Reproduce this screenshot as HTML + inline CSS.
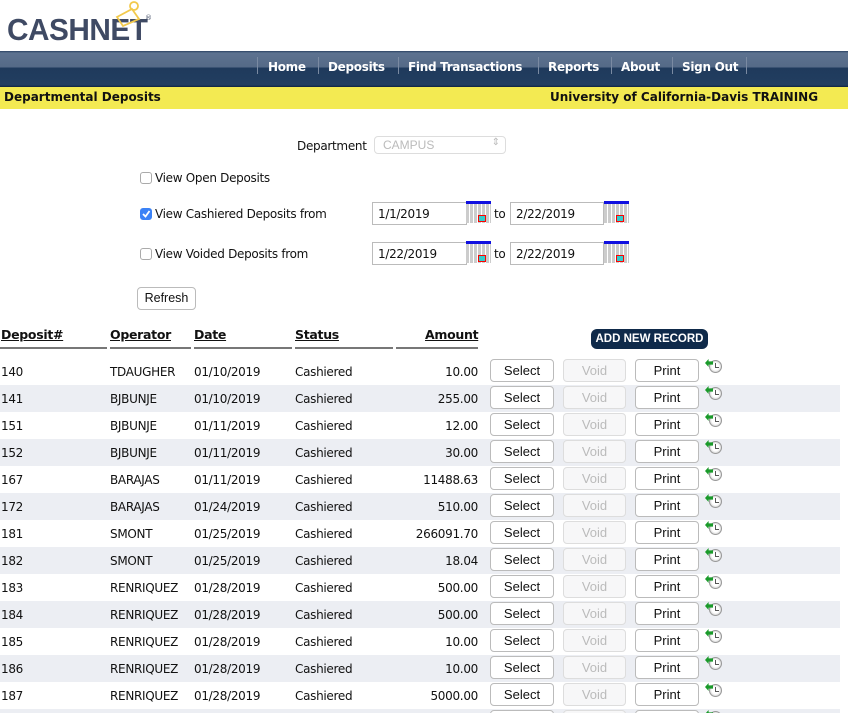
<!DOCTYPE html>
<html><head><meta charset="utf-8"><style>
*{box-sizing:border-box}
html,body{margin:0;width:862px;height:713px;overflow:hidden}
body{background:#fff;font-family:"DejaVu Sans","Liberation Sans",sans-serif;font-size:12px;color:#111;position:relative;letter-spacing:-0.3px}
.a{position:absolute;white-space:nowrap}
.logo{left:7px;top:12px;font-family:"Liberation Sans",sans-serif;font-weight:bold;font-size:31px;color:#3f4a64;letter-spacing:-0.5px;transform:scaleX(0.96);transform-origin:left}
.nav{left:0;top:51px;width:848px;height:36px;background:linear-gradient(#2a4263 0,#5d7290 2px,#556a87 16px,#1f3a5c 17px,#223e60 34px,#0f2440 36px)}
.nav span{position:absolute;top:9px;color:#fff;font-weight:bold;font-size:12px;letter-spacing:-0.3px}
.sep{position:absolute;top:6px;width:1px;height:17px;background:#1a2c44;border-right:1px solid #7a8aa2}
.yel{left:0;top:87px;width:848px;height:22px;background:#f3ea52;font-weight:bold;font-size:12px;letter-spacing:0}
.inp{position:absolute;height:23px;border:1px solid #bbb;background:#fff;padding:4px 5px;font-size:12px}
.cal{position:absolute;width:25px;height:22px;background:repeating-linear-gradient(90deg,#ccc 0 3px,#fff 3px 4px);border-top:3px solid #1010e0}
.cal:after{content:"";position:absolute;left:12px;top:11px;width:6px;height:5px;border:1px solid red;background:#3cc}
.cb{position:absolute;width:12px;height:12px;border:1px solid #aaa;border-radius:3px;background:#fff}
.btn{position:absolute;height:23px;border:1px solid #bbb;border-radius:4px;background:#fff;text-align:center;line-height:21px;font-family:"Liberation Sans",sans-serif;font-size:13px;letter-spacing:0}
.h{position:absolute;top:327px;font-weight:bold;font-size:12.5px;text-decoration:underline}
.hl{position:absolute;top:347px;height:2px;background:#777}
.row{position:absolute;left:0;width:840px;height:27px}
.row span{position:absolute;top:7px}
.ic{position:absolute;left:709px;top:2px;width:13px;height:13px;border-radius:50%;border:1px solid #999;background:radial-gradient(#fff 45%,#ccc 80%)}
.ic:before{content:"";position:absolute;left:-5px;top:-2px;width:8px;height:8px;background:#1a9a2a;clip-path:polygon(0 50%,45% 0,45% 30%,100% 30%,100% 70%,45% 70%,45% 100%)}
.ic:after{content:"";position:absolute;left:5px;top:2px;width:3px;height:4px;border-left:1px solid #555;border-bottom:1px solid #555}
</style></head><body>
<div class="a logo">CASHNET</div>
<div class="a" style="left:145px;top:14px;font-size:7px;color:#3f4a64">®</div>
<svg class="a" style="left:112px;top:0" width="34" height="28"><path d="M5 17 L20 9 L27 19 L11 26 Z" fill="none" stroke="#f2c94c" stroke-width="1.8"/><circle cx="22" cy="6" r="4" fill="none" stroke="#f2c94c" stroke-width="1.8"/></svg>
<div class="a nav">
<div class="sep" style="left:257px"></div><span style="left:268px">Home</span>
<div class="sep" style="left:318px"></div><span style="left:328px">Deposits</span>
<div class="sep" style="left:398px"></div><span style="left:408px">Find Transactions</span>
<div class="sep" style="left:538px"></div><span style="left:548px">Reports</span>
<div class="sep" style="left:611px"></div><span style="left:621px">About</span>
<div class="sep" style="left:672px"></div><span style="left:682px">Sign Out</span>
<div class="sep" style="left:746px"></div>
</div>
<div class="a yel"><span class="a" style="left:4px;top:3px">Departmental Deposits</span><span class="a" style="left:550px;top:3px">University of California-Davis TRAINING</span></div>

<div class="a" style="left:297px;top:139px">Department</div>
<div class="a" style="left:374px;top:136px;width:132px;height:18px;border:1px solid #ddd;border-radius:4px;color:#bbb;font-family:'Liberation Sans',sans-serif;font-size:12px;padding:1px 8px;letter-spacing:0">CAMPUS<span style="position:absolute;right:5px;top:0;font-size:10px">⇕</span></div>

<div class="cb" style="left:140px;top:172px"></div><div class="a" style="left:155px;top:171px">View Open Deposits</div>
<div class="cb" style="left:140px;top:208px;background:#3b82f6;border-color:#3b82f6"></div>
<svg class="a" style="left:141px;top:209px" width="10" height="10"><path d="M2 5 L4.5 7.5 L8.5 2" fill="none" stroke="#fff" stroke-width="1.8"/></svg>
<div class="a" style="left:155px;top:207px">View Cashiered Deposits from</div>
<div class="cb" style="left:140px;top:248px"></div><div class="a" style="left:155px;top:247px">View Voided Deposits from</div>

<div class="inp" style="left:372px;top:202px;width:95px">1/1/2019</div><div class="cal" style="left:466px;top:201px"></div>
<div class="a" style="left:494px;top:207px">to</div>
<div class="inp" style="left:510px;top:202px;width:94px">2/22/2019</div><div class="cal" style="left:604px;top:201px"></div>
<div class="inp" style="left:372px;top:242px;width:95px">1/22/2019</div><div class="cal" style="left:466px;top:241px"></div>
<div class="a" style="left:494px;top:247px">to</div>
<div class="inp" style="left:510px;top:242px;width:94px">2/22/2019</div><div class="cal" style="left:604px;top:241px"></div>

<div class="btn" style="left:137px;top:287px;width:59px;font-size:12.5px">Refresh</div>

<div class="h" style="left:1px">Deposit#</div>
<div class="h" style="left:110px">Operator</div>
<div class="h" style="left:194px">Date</div>
<div class="h" style="left:295px">Status</div>
<div class="h" style="left:425px">Amount</div>
<div class="hl" style="left:0;width:107px"></div>
<div class="hl" style="left:110px;width:81px"></div>
<div class="hl" style="left:194px;width:98px"></div>
<div class="hl" style="left:295px;width:98px"></div>
<div class="hl" style="left:396px;width:82px"></div>
<div class="a" style="left:591px;top:329px;width:117px;height:20px;background:#0f2a4a;border-radius:6px;color:#fff;font-family:'Liberation Sans',sans-serif;font-weight:bold;font-size:11.5px;text-align:center;line-height:20px;letter-spacing:0">ADD NEW RECORD</div>

<div id="rows"></div>
<script>
var d=[["140","TDAUGHER","01/10/2019","10.00"],["141","BJBUNJE","01/10/2019","255.00"],["151","BJBUNJE","01/11/2019","12.00"],["152","BJBUNJE","01/11/2019","30.00"],["167","BARAJAS","01/11/2019","11488.63"],["172","BARAJAS","01/24/2019","510.00"],["181","SMONT","01/25/2019","266091.70"],["182","SMONT","01/25/2019","18.04"],["183","RENRIQUEZ","01/28/2019","500.00"],["184","RENRIQUEZ","01/28/2019","500.00"],["185","RENRIQUEZ","01/28/2019","10.00"],["186","RENRIQUEZ","01/28/2019","10.00"],["187","RENRIQUEZ","01/28/2019","5000.00"],["","","",""]];
var h="";d.forEach(function(r,i){var y=358+27*i;h+='<div class="row" style="top:'+y+'px;'+(i%2?'background:#eceef3':'')+'">'+(r[0]?'<span style="left:1px">'+r[0]+'</span><span style="left:110px">'+r[1]+'</span><span style="left:194px">'+r[2]+'</span><span style="left:295px">Cashiered</span><span style="right:362px">'+r[3]+'</span>':'')+'<div class="btn" style="left:490px;top:1px;width:64px">Select</div><div class="btn" style="left:563px;top:1px;width:63px;color:#bbb;border-color:#ddd;background:#f7f7f8">Void</div><div class="btn" style="left:635px;top:1px;width:64px">Print</div><div class="ic"></div></div>';});
document.getElementById("rows").innerHTML=h;
</script>
</body></html>
